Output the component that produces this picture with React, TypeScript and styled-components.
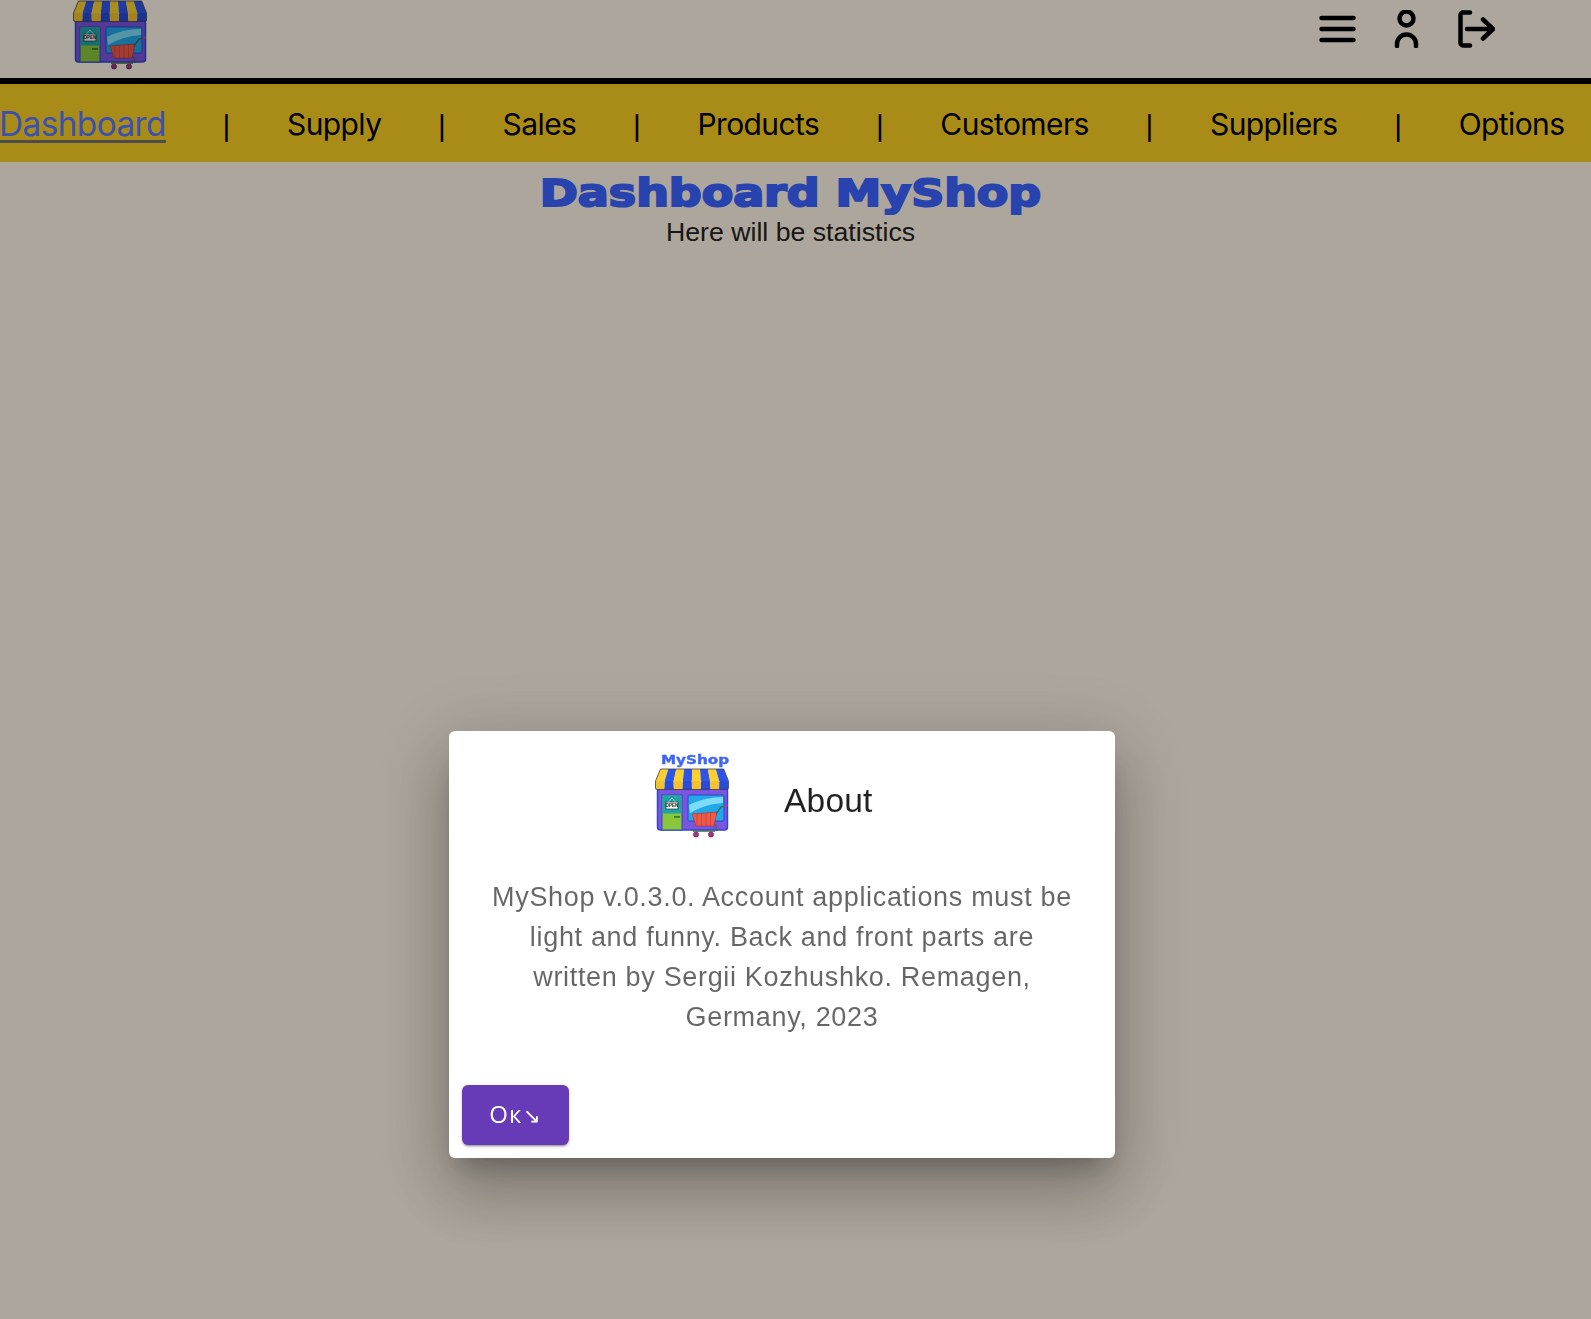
import React from "react";
import styled, { createGlobalStyle } from "styled-components";

const GlobalStyle = createGlobalStyle`
  html, body {
    margin: 0;
    padding: 0;
    height: 100%;
    background-color: #fff5e6;
    font-family: "Liberation Sans", Arial, sans-serif;
    overflow: hidden;
  }
`;

const navItems = ["Dashboard", "Supply", "Sales", "Products", "Customers", "Suppliers", "Options"];

function ShopLogo({ named }: { named?: boolean }) {
  const stripes = [0, 1, 2, 3, 4, 5, 6, 7];
  return (
    <LogoSvg viewBox={named ? "0 -16 75 86" : "0 0 75 70"} $named={named}>
      {named && (
        <LogoName x="40" y="-4" textAnchor="middle" textLength="68" lengthAdjust="spacingAndGlyphs">
          MyShop
        </LogoName>
      )}
      <rect x="2.500" y="20" width="70" height="42" rx="3" fill="#7a55e0" stroke="#2f47c8" strokeWidth="1.500" />
      {stripes.map((i) => (
        <path
          key={i}
          d={`M${5.5 + i * 7.9} 1 h7.9 L${0.5 + (i + 1) * 9.1} 13 h-9.100 Z`}
          fill={i % 2 === 0 ? "#fbd02f" : "#2f55e6"}
        />
      ))}
      {stripes.map((i) => (
        <rect
          key={`v${i}`}
          x={0.5 + i * 9.1}
          y="13"
          width="9.100"
          height="8.500"
          rx="1"
          fill={i % 2 === 0 ? "#f4c22a" : "#2a4bd6"}
        />
      ))}
      <path d="M5.500 1h63.200L73.500 13v7a1.500 1.500 0 0 1-1.500 1.500H2A1.500 1.500 0 0 1 .5 20v-7Z" fill="none" stroke="#3a3a58" strokeWidth="0.800" />
      <rect x="7" y="27" width="20" height="35" fill="#8ac63c" stroke="#2f47c8" strokeWidth="1" />
      <rect x="7.500" y="27.500" width="19" height="18" fill="#1fa3a8" />
      <rect x="11" y="34" width="12" height="7" fill="#f4f4f4" stroke="#222" strokeWidth="0.600" />
      <SignText x="17" y="39.200" textAnchor="middle">
        OPEN
      </SignText>
      <path d="M13.500 34l3.500-4 3.500 4" fill="none" stroke="#dff" strokeWidth="0.600" />
      <rect x="19" y="48" width="6" height="1.800" fill="#3a7f20" />
      <rect x="33" y="27" width="36" height="26" rx="1" fill="#22a7e8" stroke="#2f47c8" strokeWidth="1" />
      <path d="M34 37 Q50 29 68 29 L68 35 Q50 36 35 45 Z" fill="#7ddcf7" />
      <path d="M37 46 L62 44 L59 58 L41 58 Z" fill="#ee5a4a" stroke="#a82e2e" strokeWidth="0.600" />
      <path d="M42 46v12M46.500 45.700v12.300M51 45.300v12.700M55.500 45v13" stroke="#b93a34" strokeWidth="0.600" />
      <path d="M61 46 L66 39 L70 38 M60 56 L62 63" fill="none" stroke="#3a6a5a" strokeWidth="1.300" />
      <path d="M70 38 l2-.6" stroke="#c2407e" strokeWidth="1.800" strokeLinecap="round" />
      <path d="M38 63h22" stroke="#3d6a55" strokeWidth="1.500" />
      <circle cx="41" cy="66.500" r="2.600" fill="#a8327e" stroke="#4a1f5a" strokeWidth="0.600" />
      <circle cx="56" cy="66.500" r="2.600" fill="#a8327e" stroke="#4a1f5a" strokeWidth="0.600" />
    </LogoSvg>
  );
}

function App() {
  return (
    <Page>
      <GlobalStyle />
      <Header>
        <ShopLogo />
        <HeaderIcons>
          <IconSvg width="37" height="38" viewBox="0 0 37 38">
            <path d="M2.500 8h32M2.500 19h32M2.500 30h32" />
          </IconSvg>
          <IconSvg width="25" height="38" viewBox="0 0 25 38">
            <circle cx="12.500" cy="8.500" r="7" />
            <path d="M3 36v-2a9.500 9.500 0 0 1 19 0v2" />
          </IconSvg>
          <IconSvg width="38" height="38" viewBox="0 0 38 38">
            <path d="M13 2.500H6a2.500 2.500 0 0 0-2.500 2.500v28A2.500 2.500 0 0 0 6 35.500h7" />
            <path d="M10 19h26M26 9.500 36 19 26 28.500" />
          </IconSvg>
        </HeaderIcons>
      </Header>
      <Nav>
        {navItems.map((item, i) => (
          <React.Fragment key={item}>
            {i > 0 && <Separator>|</Separator>}
            <NavLink $active={i === 0}>{item}</NavLink>
          </React.Fragment>
        ))}
      </Nav>
      <Content>
        <Title>Dashboard MyShop</Title>
        <Subtitle>Here will be statistics</Subtitle>
      </Content>
      <Overlay>
        <Dialog role="dialog">
          <DialogHead>
            <ShopLogo named />
            <DialogTitle>About</DialogTitle>
          </DialogHead>
          <DialogText>
            MyShop v.0.3.0. Account applications must be light and funny. Back and front parts are written by Sergii
            Kozhushko. Remagen, Germany, 2023
          </DialogText>
          <DialogActions>
            <OkButton>
              Ок<OkArrow>↘</OkArrow>
            </OkButton>
          </DialogActions>
        </Dialog>
      </Overlay>
    </Page>
  );
}

export default App;

const Page = styled.div`
  height: 1319px;
  overflow: hidden;
  background-color: #fff5e6;
`;
const Header = styled.header`
  height: 78px;
  display: flex;
  justify-content: space-between;
  padding: 0 96px 0 73px;
`;
const LogoSvg = styled.svg<{ $named?: boolean }>`
  display: block;
  width: 75px;
  height: ${(p) => (p.$named ? "86px" : "70px")};
  flex-shrink: 0;
`;
const LogoName = styled.text`
  font-family: "DejaVu Sans", sans-serif;
  font-weight: 700;
  font-size: 12px;
  fill: #3f66f5;
  stroke: #3f66f5;
  stroke-width: 0.4px;
`;
const SignText = styled.text`
  font-family: "Liberation Sans", sans-serif;
  font-weight: 700;
  font-size: 4.5px;
  fill: #222;
`;
const HeaderIcons = styled.div`
  display: flex;
  align-items: flex-start;
  gap: 38px;
  padding-top: 10px;
`;
const IconSvg = styled.svg`
  display: block;
  fill: none;
  stroke: #000;
  stroke-width: 4.5px;
  stroke-linecap: round;
  stroke-linejoin: round;
`;
const Nav = styled.nav`
  height: 76px;
  padding-top: 2px;
  border-top: 6px solid #000;
  background-color: #f8cf22;
  display: flex;
  align-items: center;
  gap: 56.7px;
  white-space: nowrap;
`;
const NavLink = styled.a<{ $active?: boolean }>`
  font-family: "Inter", sans-serif;
  font-size: ${(p) => (p.$active ? "33.4px" : "30px")};
  letter-spacing: -0.6px;
  margin-left: ${(p) => (p.$active ? "-1px" : "0")};
  color: ${(p) => (p.$active ? "#5878ff" : "#000")};
  text-decoration: ${(p) => (p.$active ? "underline" : "none")};
  text-decoration-color: #707070;
  text-underline-offset: 4px;
  text-decoration-thickness: 3px;
`;
const Separator = styled.span`
  font-family: "Liberation Sans", sans-serif;
  font-size: 30px;
  line-height: 1;
  padding-top: 4px;
  color: #000;
`;
const Content = styled.main`
  padding-right: 10px;
  padding-top: 12px;
  text-align: center;
`;
const Title = styled.h1`
  display: block;
  margin: 0;
  font-family: "DejaVu Sans", sans-serif;
  font-weight: 700;
  font-size: 37px;
  line-height: 40px;
  color: #3b63ff;
  -webkit-text-stroke: 2px #3b63ff;
  transform: scaleX(1.24);
`;
const Subtitle = styled.p`
  margin: 0;
  font-size: 26.7px;
  line-height: 36px;
  color: #222;
`;
const Overlay = styled.div`
  position: fixed;
  inset: 0;
  background-color: rgba(0, 0, 0, 0.32);
  padding: 731px 0 0 449px;
  box-sizing: border-box;
`;
const Dialog = styled.div`
  width: 666px;
  height: 427px;
  box-sizing: border-box;
  background-color: #fff;
  border-radius: 6px;
  box-shadow: 0 18px 24px -11px rgba(0, 0, 0, 0.24), 0 38px 60px 5px rgba(0, 0, 0, 0.16),
    0 14px 74px 13px rgba(0, 0, 0, 0.15);
  padding-top: 21px;
  display: flex;
  flex-direction: column;
`;
const DialogHead = styled.div`
  display: flex;
  align-items: center;
  gap: 54px;
  padding-left: 206px;
`;
const DialogTitle = styled.h2`
  margin: 0;
  padding-top: 12px;
  font-weight: 400;
  font-size: 33.5px;
  letter-spacing: 0.2px;
  color: rgba(0, 0, 0, 0.87);
`;
const DialogText = styled.p`
  margin: 39px 0 0;
  padding: 0 38px;
  font-size: 27px;
  line-height: 40px;
  letter-spacing: 0.67px;
  text-align: center;
  color: rgba(0, 0, 0, 0.6);
`;
const DialogActions = styled.div`
  margin-top: auto;
  padding: 0 13px 13px;
  display: flex;
`;
const OkButton = styled.button`
  width: 107px;
  height: 60px;
  padding: 0 0 3px;
  border: 0;
  border-radius: 6px;
  background-color: #673ab7;
  color: #fff;
  font-family: "Open Sans", sans-serif;
  font-size: 24px;
  letter-spacing: 1.2px;
  box-shadow: 0 3px 1px -2px rgba(0, 0, 0, 0.2), 0 2px 2px 0 rgba(0, 0, 0, 0.14), 0 1px 5px 0 rgba(0, 0, 0, 0.12);
`;
const OkArrow = styled.span`
  font-size: 21px;
  line-height: 0;
`;
